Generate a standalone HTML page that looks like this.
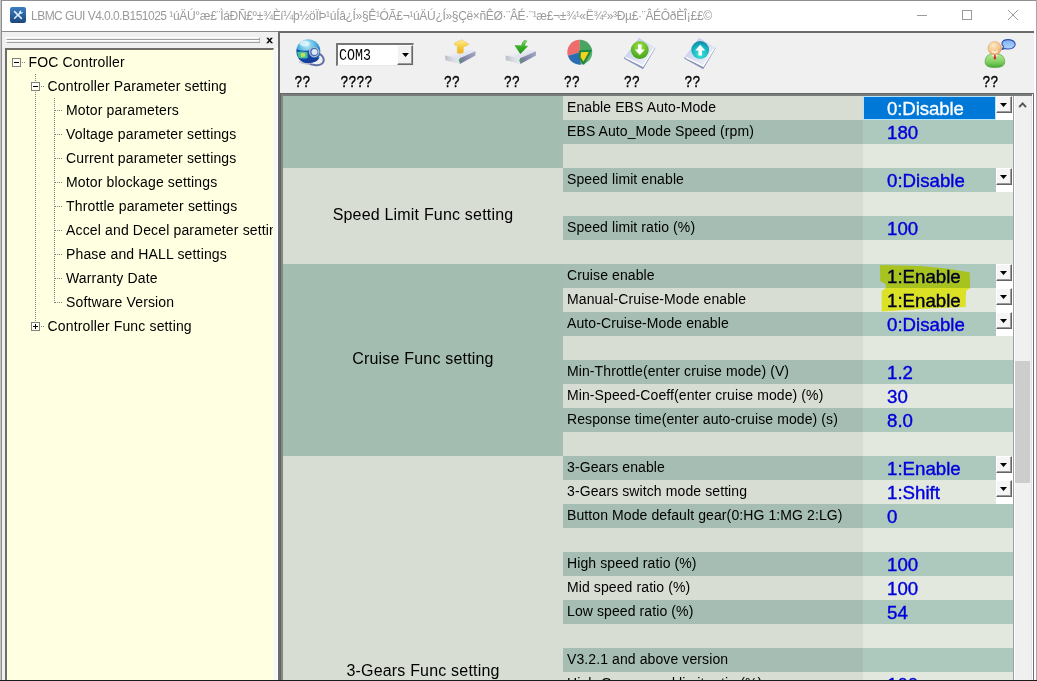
<!DOCTYPE html>
<html lang="en"><head><meta charset="utf-8"><title>LBMC GUI</title>
<style>
html,body{margin:0;padding:0;}
body{width:1037px;height:681px;overflow:hidden;background:#f0f0f0;font-family:"Liberation Sans",sans-serif;}
#win{position:relative;width:1037px;height:681px;overflow:hidden;background:#f0f0f0;}
#win div,#win span,#win svg,#win i{position:absolute;box-sizing:border-box;}
/* window frame */
.titlebar{left:0;top:0;width:1037px;height:32px;background:#fff;border-top:1px solid #8f8f8f;border-bottom:1px solid #8a8a8a;}
.tline{left:278px;top:31px;width:757px;height:2px;background:#6b6b6b;}
.ttext{left:31px;top:6.5px;height:18px;line-height:18px;font-size:12px;color:#9a9a9a;white-space:pre;}
.ttext span{position:static !important;}
.t1{letter-spacing:-0.52px;}.t2{letter-spacing:-0.32px;}
.edgeL0{left:0;top:0;width:1px;height:681px;background:#c4c4c4;}
.edgeL1{left:1px;top:0;width:1px;height:681px;background:#8e8e8e;}
.edgeR0{left:1036px;top:0;width:1px;height:681px;background:#a6a6a6;}
.edgeR1{left:1034px;top:31px;width:2px;height:650px;background:#fff;}
.edgeB{left:0;top:680px;width:1037px;height:1px;background:#1c1c1c;}
/* left panel */
.grip{left:6px;width:254px;height:3px;border-top:1px solid #fff;border-left:1px solid #fff;border-bottom:1px solid #a0a0a0;border-right:1px solid #a0a0a0;}
.g1{top:37px}.g2{top:40px}
.px{left:264.6px;top:32.1px;width:9px;height:16px;line-height:16px;font-size:10.5px;font-weight:bold;color:#000;-webkit-text-stroke:0.3px #000;text-align:center;transform:scale(1.06,0.84);transform-origin:50% 50%;}
.treebox{left:5px;top:48px;width:269px;height:640px;background:#ffffe1;border-top:2px solid #6e6d6a;border-left:2px solid #6e6d6a;border-right:1px solid #fcfcf0;overflow:hidden;}
.treein{left:0;top:0;width:266px;height:640px;overflow:hidden;}
.tl{height:24px;line-height:24px;font-size:14px;letter-spacing:0.15px;color:#000;white-space:nowrap;}
.lstrip{left:274px;top:48px;width:4px;height:633px;background:#f6f6f6;border-right:2px solid #fbfbfb;}
.split{left:278px;top:32px;width:2px;height:649px;background:#6c6c6c;}
/* grid */
.gridframe{left:280px;top:93px;width:754px;height:600px;border-top:1px solid #686868;border-left:1px solid #626262;border-right:1px solid #6b6b6b;background:#f0f0f0;}
.gf2{left:281px;top:94px;width:751px;height:600px;border-top:2px solid #787d7b;border-left:2px solid #838886;}
.grid{left:283px;top:96px;width:730px;height:590px;overflow:hidden;background:#d9ded5;}
.sec{left:0;width:280px;}
.sec.d{background:#a3bdb1;}
.sec.l{background:#d8ddd4;}
.sec span{left:0;width:280px;top:50%;margin-top:-11px;height:20px;line-height:20px;text-align:center;font-size:16px;letter-spacing:0.19px;color:#000;white-space:nowrap;}
.pr{left:280px;width:300px;height:24px;line-height:23px;font-size:14px;letter-spacing:0.1px;color:#000;padding-left:4px;white-space:nowrap;}
.pr.l{background:#d8ddd4;}
.pr.d{background:#a5bdb2;}
.vr{left:580px;width:150px;height:24px;}
.vr.l{background:#e2e8dd;}
.vr.d{background:#adc9be;}
.vr span{left:24px;top:0;height:24px;line-height:26px;font-size:18.67px;letter-spacing:0;color:#0000dc;-webkit-text-stroke:0.4px #0000dc;white-space:nowrap;}
.selbox{left:0;top:0;width:133px;height:24px;border:1px solid #b5e3fb;background:#0078d7;color:#fff;font-size:18.67px;letter-spacing:-0.1px;-webkit-text-stroke:0.3px #fff;line-height:24px;padding-left:23px;white-space:nowrap;}
.cbw{left:713px;width:17px;height:24px;background:#fff;}
.cbb{left:713px;width:16px;height:17px;background:#f5f5f5;border-top:1px solid #fff;border-left:1px solid #fff;border-right:1px solid #646464;border-bottom:1px solid #646464;box-shadow:inset -1px -1px 0 #9a9a9a;}
.cbb i{left:3px;top:6px;width:7px;height:4px;background:#000;clip-path:polygon(0 0,100% 0,50% 100%);}
/* scrollbar */
.sbline{left:1013px;top:96px;width:1px;height:585px;background:#a0a0a0;}
.sbw{left:1014px;top:96px;width:1px;height:585px;background:#fff;}
.sbt{left:1015px;top:96px;width:17px;height:585px;background:#f0f0f0;}
.sbthumb{left:1015px;top:361px;width:15px;height:122px;background:#cdcdcd;}
.sbe{left:1031px;top:96px;width:1px;height:585px;background:#e3e3e3;}
.sbw2{left:1032px;top:96px;width:1px;height:585px;background:#fff;}
/* toolbar */
.tbl{top:74.9px;height:16px;line-height:16px;font-family:"Liberation Mono",monospace;font-size:13.33px;color:#000;-webkit-text-stroke:0.3px #000;white-space:nowrap;transform:scaleY(1.24);transform-origin:0 50%;}
.combo{left:336px;top:43px;width:78px;height:23px;background:#fff;border-top:2px solid #767676;border-left:2px solid #767676;border-right:1px solid #e8e8e8;border-bottom:1px solid #e8e8e8;}
.combo .ct{left:1px;top:1px;height:19px;line-height:19px;font-family:"Liberation Mono",monospace;font-size:13.33px;color:#000;transform:scaleY(1.2);transform-origin:0 50%;}
.combo .cb{left:59px;top:0;width:16px;height:20px;background:#f2f2f2;border-top:1px solid #fff;border-left:1px solid #fff;border-right:1px solid #686868;border-bottom:1px solid #686868;box-shadow:inset -1px -1px 0 #9a9a9a;}
.combo .cb i{left:4px;top:7px;width:7px;height:4px;background:#000;clip-path:polygon(0 0,100% 0,50% 100%);}

</style></head>
<body>
<div id="win">
<div class="titlebar"></div>
<div class="ttext"><span class="t1">LBMC GUI V4.0.0.B151025 </span><span class="t2">¹úÄÚ°æ£¨ÌáÐÑ£º±¾Èí¼þ½öÏÞ¹úÍâ¿Í»§Ê¹ÓÃ£¬¹úÄÚ¿Í»§Çë×ñÊØ·¨ÂÉ·¨¹æ£¬±¾¹«Ë¾²»³Ðµ£·¨ÂÉÔðÈÎ¡££©</span></div>
<div class="tline"></div><div class="edgeL0"></div><div class="edgeL1"></div><div class="edgeR1"></div><div class="edgeR0"></div>
<svg class="ticon" style="left:10px;top:7px" width="16" height="16" viewBox="0 0 16 16"><defs><linearGradient id="tg" x1="0" y1="0" x2="0" y2="1"><stop offset="0" stop-color="#3c7fc0"/><stop offset="1" stop-color="#1b467c"/></linearGradient></defs><rect x="0" y="0" width="16" height="16" rx="2.2" fill="url(#tg)"/><path d="M4.6 4.6 L11.4 11.4" stroke="#dceefc" stroke-width="1.6" stroke-linecap="round"/><path d="M10.8 5.2 L4.6 11.3" stroke="#dceefc" stroke-width="1.6" stroke-linecap="round"/><circle cx="10.8" cy="5.2" r="1.7" fill="#dceefc"/><circle cx="11.7" cy="4.3" r="0.85" fill="#2f6fae"/></svg>
<svg class="wc" style="left:910px;top:5px" width="120" height="22" viewBox="0 0 120 22"><path d="M7 10.5 H17" stroke="#9a9a9a" stroke-width="1" fill="none"/><rect x="52.5" y="5.5" width="9" height="9" stroke="#9a9a9a" stroke-width="1" fill="none"/><path d="M98 5 L108 15 M108 5 L98 15" stroke="#9a9a9a" stroke-width="1" fill="none"/></svg>
<svg class="tbicons" style="left:280px;top:33px" width="754" height="60" viewBox="280 33 754 60">
<defs>
<radialGradient id="gl" cx="0.45" cy="0.25" r="0.8"><stop offset="0" stop-color="#bfeaf7"/><stop offset="0.45" stop-color="#4fb4e0"/><stop offset="0.8" stop-color="#1a5fb5"/><stop offset="1" stop-color="#123f8f"/></radialGradient>
<linearGradient id="drT" x1="0" y1="0" x2="1" y2="1"><stop offset="0" stop-color="#ffffff"/><stop offset="1" stop-color="#cfd3e2"/></linearGradient>
<linearGradient id="drF" x1="0" y1="0" x2="1" y2="0"><stop offset="0" stop-color="#b9bcc8"/><stop offset="0.5" stop-color="#d9dbe4"/><stop offset="1" stop-color="#e6e8ee"/></linearGradient>
<linearGradient id="drR" x1="0" y1="1" x2="1" y2="0"><stop offset="0" stop-color="#6a6f96"/><stop offset="1" stop-color="#a7abc6"/></linearGradient>
<linearGradient id="yel" x1="0" y1="0" x2="0" y2="1"><stop offset="0" stop-color="#fdf0a0"/><stop offset="0.5" stop-color="#f7cf3a"/><stop offset="1" stop-color="#f0b020"/></linearGradient>
<linearGradient id="grn" x1="0" y1="0" x2="0" y2="1"><stop offset="0" stop-color="#8be06a"/><stop offset="0.5" stop-color="#36b024"/><stop offset="1" stop-color="#1f8f18"/></linearGradient>
<linearGradient id="doc" x1="0" y1="0" x2="1" y2="1"><stop offset="0" stop-color="#b9c3e6"/><stop offset="0.6" stop-color="#dfe3f3"/><stop offset="1" stop-color="#f4f5fb"/></linearGradient>
<radialGradient id="gc" cx="0.5" cy="0.3" r="0.8"><stop offset="0" stop-color="#a4e04a"/><stop offset="0.6" stop-color="#5cb824"/><stop offset="1" stop-color="#3b9416"/></radialGradient>
<radialGradient id="tc" cx="0.5" cy="0.75" r="0.8"><stop offset="0" stop-color="#3fe6dc"/><stop offset="0.6" stop-color="#16b4c0"/><stop offset="1" stop-color="#0b7f9c"/></radialGradient>
<radialGradient id="hd" cx="0.4" cy="0.3" r="0.8"><stop offset="0" stop-color="#fde9c8"/><stop offset="0.6" stop-color="#f5c48a"/><stop offset="1" stop-color="#e59a55"/></radialGradient>
<linearGradient id="bd" x1="0" y1="0" x2="0" y2="1"><stop offset="0" stop-color="#bdeaa0"/><stop offset="0.6" stop-color="#7fd060"/><stop offset="1" stop-color="#46a632"/></linearGradient>
<linearGradient id="bub" x1="0" y1="0" x2="0" y2="1"><stop offset="0" stop-color="#7fb0f4"/><stop offset="1" stop-color="#b4d4fd"/></linearGradient>
<filter id="sb" x="-20%" y="-20%" width="140%" height="140%"><feGaussianBlur stdDeviation="0.45"/></filter>
</defs>
<!-- icon 1: network globe -->
<g filter="url(#sb)">
<path d="M318.6 53.4 Q324.6 56.4 323.6 61.4 Q321.6 66 314.6 65 Q310.6 64.6 308 63.4" fill="none" stroke="#6470a6" stroke-width="2" stroke-linecap="round"/>
<path d="M299 61.6 Q304 64.6 310 63.6" stroke="#c4c8d4" stroke-width="1.8" fill="none"/>
<circle cx="308.3" cy="51.2" r="12" fill="url(#gl)"/>
<path d="M296.6 49.2 Q302 51.6 309.6 50.2 L311 55 L312 62 Q305 65 299.6 59.8 Q297 56 296.6 49.2 Z" fill="#123a9c" opacity="0.85"/>
<path d="M297 52 Q302 51 307.6 52.2 L307.6 58 Q302 59.4 298.4 57.4 Z" fill="#3cc0a2"/>
<path d="M300.4 53.6 l4.4 -1 l0.6 3.6 l-4.2 1.2 z" fill="#c4dc58"/>
<path d="M310 55 Q314 60.6 319.6 57 Q318 62 311.6 62.6 Z" fill="#143c9c"/>
<circle cx="314.2" cy="52" r="5.3" fill="#a9b9cb"/>
<circle cx="314.2" cy="52" r="3.9" fill="#3a66b4"/>
<circle cx="314.5" cy="52" r="3" fill="#dfe6f2"/>
<ellipse cx="304.6" cy="43.4" rx="5" ry="3" fill="#e4f8fc" opacity="0.8"/>
</g>
<!-- icon 2: drive + yellow up arrow -->
<g filter="url(#sb)">
<path d="M445 55.5 L464.5 48.5 L475.6 51.3 L459.5 58.2 Z" fill="url(#drT)"/>
<path d="M445 55.5 L459.5 58.2 L459.8 64 L445.4 60.2 Z" fill="url(#drF)"/>
<path d="M459.5 58.2 L475.6 51.3 L475.4 55.4 L459.8 64 Z" fill="url(#drR)"/>
<circle cx="460" cy="60.6" r="1.3" fill="#3fae4a"/>
<path d="M457.3 53 L457.3 46.5 Q457.5 44.6 455 45.2 L454.6 43 L461.5 39.8 L468.8 44.2 L466 46.2 Q463.5 45.5 463.3 47.5 L463.3 52.5 Q460 54 457.3 53 Z" fill="url(#yel)" stroke="#e8b83a" stroke-width="0.5"/>
</g>
<!-- icon 3: drive + green down arrow -->
<g filter="url(#sb)">
<path d="M505.5 55.5 L525 48.5 L536.1 51.3 L520 58.2 Z" fill="url(#drT)"/>
<path d="M505.5 55.5 L520 58.2 L520.3 64 L505.9 60.2 Z" fill="url(#drF)"/>
<path d="M520 58.2 L536.1 51.3 L535.9 55.4 L520.3 64 Z" fill="url(#drR)"/>
<circle cx="520.5" cy="60.6" r="1.3" fill="#3fae4a"/>
<path d="M524.5 40.2 Q521.8 42.2 521.6 45.8 L515 45.5 L520.4 53.8 L527.6 46.2 L524.6 46 Q524.4 43 527 41.2 Z" fill="url(#grn)" stroke="#2a9a20" stroke-width="0.5"/>
</g>
<!-- icon 4: pie -->
<g filter="url(#sb)">
<circle cx="579.8" cy="52.2" r="12.4" fill="#d0d4d8"/>
<path d="M579.8 52.2 L579.8 39.8 A12.4 12.4 0 0 0 567.9 55.8 Z" fill="#ee6c6c"/>
<path d="M579.8 52.2 L579.8 39.8 A12.4 12.4 0 0 1 592.2 52.2 Z" fill="#4aa662"/>
<path d="M579.8 52.2 L567.9 55.8 A12.4 12.4 0 0 0 581 64.6 Z" fill="#2a6db4"/>
<path d="M579.8 52.2 L592.2 52.2 A12.4 12.4 0 0 1 581 64.6 Z" fill="#58b070"/>
<path d="M580 51.2 L590.6 50.8 L583.6 63.6 L579.6 57.5 Z" fill="#f6d21c" stroke="#1f8a3c" stroke-width="2" stroke-linejoin="round"/>
</g>
<!-- icon 5: doc + green down -->
<g filter="url(#sb)">
<path d="M624.2 58.8 L643 69.2 L655.2 48.6 L655.2 46.8 L643 65.6 L624.2 56.6 Z" fill="#8c98ba"/>
<path d="M624.2 56.6 L638.8 37.2 L655.2 46.8 L643 66.4 Z" fill="url(#doc)" stroke="#f4f6fc" stroke-width="0.8"/>
<path d="M626 57.6 L643 66 L653.5 49" stroke="#ffffff" stroke-width="1.2" fill="none"/>
<circle cx="639.8" cy="50" r="8.9" fill="url(#gc)"/>
<path d="M638 44.4 h3.6 v5 h3.2 l-5 5.6 l-5 -5.6 h3.2 z" fill="#ffffff"/>
</g>
<!-- icon 6: doc + teal up -->
<g filter="url(#sb)">
<path d="M684.4 58.8 L703.2 69.2 L715.4 48.6 L715.4 46.8 L703.2 65.6 L684.4 56.6 Z" fill="#8c98ba"/>
<path d="M684.4 56.6 L699 37.2 L715.4 46.8 L703.2 66.4 Z" fill="url(#doc)" stroke="#f4f6fc" stroke-width="0.8"/>
<path d="M686.2 57.6 L703.2 66 L713.7 49" stroke="#ffffff" stroke-width="1.2" fill="none"/>
<circle cx="700.2" cy="50" r="8.9" fill="url(#tc)"/>
<path d="M698.4 55.4 h3.6 v-5 h3.2 l-5 -5.6 l-5 5.6 h3.2 z" fill="#ffffff"/>
</g>
<!-- icon 7: user + bubble -->
<g filter="url(#sb)">
<path d="M985 62 Q985 53.6 994.8 53.6 Q1004.8 53.6 1004.8 62 Q1004.8 67.6 994.8 67.6 Q985 67.6 985 62 Z" fill="url(#bd)" stroke="#4a9a3a" stroke-width="0.6"/>
<path d="M991.6 54.2 L994.8 59 L998 54.2 Z" fill="#ffffff"/>
<path d="M994 55 h1.7 l0.5 3.4 l-1.3 1.4 l-1.4 -1.4 z" fill="#d8322a"/>
<circle cx="994.7" cy="48.2" r="6.7" fill="url(#hd)" stroke="#d79a5c" stroke-width="0.5"/>
<path d="M991.8 51.2 Q994.7 53.4 997.6 51.2" stroke="#fff6ea" stroke-width="1.2" fill="none"/>
<path d="M1002.2 49.4 L1003.6 46.6 Q1001.4 44.8 1002 42.6 Q1003.4 39.4 1008.6 39.6 Q1014.6 40 1015.2 44.2 Q1014.8 48.6 1008.6 49 Q1006.4 49 1005.2 48.4 Z" fill="url(#bub)" stroke="#3050a8" stroke-width="1.1"/>
</g>
</svg>
<div class="combo"><span class="ct">COM3</span><div class="cb"><i></i></div></div>
<div class="tbl" style="left:294.5px">??</div>
<div class="tbl" style="left:340.5px">????</div>
<div class="tbl" style="left:444px">??</div>
<div class="tbl" style="left:504px">??</div>
<div class="tbl" style="left:564px">??</div>
<div class="tbl" style="left:624px">??</div>
<div class="tbl" style="left:684.5px">??</div>
<div class="tbl" style="left:982.5px">??</div>
<div class="grip g1"></div><div class="grip g2"></div>
<div class="px">x</div>
<div class="treebox"><div class="treein">
<div class="tl" style="left:21.5px;top:0px">FOC Controller</div>
<div class="tl" style="left:40.5px;top:24px">Controller Parameter setting</div>
<div class="tl" style="left:59px;top:48px">Motor parameters</div>
<div class="tl" style="left:59px;top:72px">Voltage parameter settings</div>
<div class="tl" style="left:59px;top:96px">Current parameter settings</div>
<div class="tl" style="left:59px;top:120px">Motor blockage settings</div>
<div class="tl" style="left:59px;top:144px">Throttle parameter settings</div>
<div class="tl" style="left:59px;top:168px">Accel and Decel parameter settings</div>
<div class="tl" style="left:59px;top:192px">Phase and HALL settings</div>
<div class="tl" style="left:59px;top:216px">Warranty Date</div>
<div class="tl" style="left:59px;top:240px">Software Version</div>
<div class="tl" style="left:40.5px;top:264px">Controller Func setting</div>
</div></div>
<svg class="tlines" style="left:0;top:0" width="280" height="681" viewBox="0 0 280 681" shape-rendering="crispEdges">
<g stroke="#808080" stroke-width="1" stroke-dasharray="1 1" fill="none">
<path d="M35.5 74 V321"/><path d="M54.5 98 V303"/>
<path d="M22 62.5 H26"/><path d="M41 86.5 H45"/><path d="M41 326.5 H45"/>
<path d="M55 110.5 H63"/><path d="M55 134.5 H63"/><path d="M55 158.5 H63"/><path d="M55 182.5 H63"/><path d="M55 206.5 H63"/><path d="M55 230.5 H63"/><path d="M55 254.5 H63"/><path d="M55 278.5 H63"/><path d="M55 302.5 H63"/>
</g>
<g stroke="#808080" stroke-width="1" fill="#fffff4">
<rect x="12.5" y="58.5" width="8" height="8"/><rect x="31.5" y="82.5" width="8" height="8"/><rect x="31.5" y="322.5" width="8" height="8"/>
</g>
<g stroke="#000" stroke-width="1" fill="none">
<path d="M14 62.5 H19"/><path d="M33 86.5 H38"/><path d="M33 326.5 H38"/><path d="M35.5 324 V329"/>
</g>
</svg>
<div class="gridframe"></div><div class="gf2"></div>
<div class="grid">
<div class="sec d" style="top:0px;height:72px"><span></span></div>
<div class="sec l" style="top:72px;height:96px"><span>Speed Limit Func setting</span></div>
<div class="sec d" style="top:168px;height:192px"><span>Cruise Func setting</span></div>
<div class="sec l" style="top:360px;height:432px"><span>3-Gears Func setting</span></div>
<div class="pr l" style="top:0px">Enable EBS Auto-Mode</div><div class="vr l" style="top:0px"><div class="selbox">0:Disable</div></div><div class="cbw" style="top:0px"></div><div class="cbb" style="top:0px"><i></i></div>
<div class="pr d" style="top:24px">EBS Auto_Mode Speed (rpm)</div><div class="vr d" style="top:24px"><span>180</span></div>
<div class="pr l" style="top:48px"></div><div class="vr l" style="top:48px"><span></span></div>
<div class="pr d" style="top:72px">Speed limit enable</div><div class="vr d" style="top:72px"><span>0:Disable</span></div><div class="cbw" style="top:72px"></div><div class="cbb" style="top:72px"><i></i></div>
<div class="pr l" style="top:96px"></div><div class="vr l" style="top:96px"><span></span></div>
<div class="pr d" style="top:120px">Speed limit ratio (%)</div><div class="vr d" style="top:120px"><span>100</span></div>
<div class="pr l" style="top:144px"></div><div class="vr l" style="top:144px"><span></span></div>
<div class="pr d" style="top:168px">Cruise enable</div><div class="vr d" style="top:168px"><span>1:Enable</span></div><div class="cbw" style="top:168px"></div><div class="cbb" style="top:168px"><i></i></div>
<div class="pr l" style="top:192px">Manual-Cruise-Mode enable</div><div class="vr l" style="top:192px"><span>1:Enable</span></div><div class="cbw" style="top:192px"></div><div class="cbb" style="top:192px"><i></i></div>
<div class="pr d" style="top:216px">Auto-Cruise-Mode enable</div><div class="vr d" style="top:216px"><span>0:Disable</span></div><div class="cbw" style="top:216px"></div><div class="cbb" style="top:216px"><i></i></div>
<div class="pr l" style="top:240px"></div><div class="vr l" style="top:240px"><span></span></div>
<div class="pr d" style="top:264px">Min-Throttle(enter cruise mode) (V)</div><div class="vr d" style="top:264px"><span>1.2</span></div>
<div class="pr l" style="top:288px">Min-Speed-Coeff(enter cruise mode) (%)</div><div class="vr l" style="top:288px"><span>30</span></div>
<div class="pr d" style="top:312px">Response time(enter auto-cruise mode) (s)</div><div class="vr d" style="top:312px"><span>8.0</span></div>
<div class="pr l" style="top:336px"></div><div class="vr l" style="top:336px"><span></span></div>
<div class="pr d" style="top:360px">3-Gears enable</div><div class="vr d" style="top:360px"><span>1:Enable</span></div><div class="cbw" style="top:360px"></div><div class="cbb" style="top:360px"><i></i></div>
<div class="pr l" style="top:384px">3-Gears switch mode setting</div><div class="vr l" style="top:384px"><span>1:Shift</span></div><div class="cbw" style="top:384px"></div><div class="cbb" style="top:384px"><i></i></div>
<div class="pr d" style="top:408px">Button Mode default gear(0:HG 1:MG 2:LG)</div><div class="vr d" style="top:408px"><span>0</span></div>
<div class="pr l" style="top:432px"></div><div class="vr l" style="top:432px"><span></span></div>
<div class="pr d" style="top:456px">High speed ratio (%)</div><div class="vr d" style="top:456px"><span>100</span></div>
<div class="pr l" style="top:480px">Mid speed ratio (%)</div><div class="vr l" style="top:480px"><span>100</span></div>
<div class="pr d" style="top:504px">Low speed ratio (%)</div><div class="vr d" style="top:504px"><span>54</span></div>
<div class="pr l" style="top:528px"></div><div class="vr l" style="top:528px"><span></span></div>
<div class="pr d" style="top:552px">V3.2.1 and above version</div><div class="vr d" style="top:552px"><span></span></div>
<div class="pr l" style="top:576px">High-Gear speed limit ratio (%)</div><div class="vr l" style="top:576px"><span>100</span></div>
</div>
<div class="sbline"></div><div class="sbw"></div><div class="sbt"></div><div class="sbthumb"></div><div class="sbe"></div><div class="sbw2"></div>
<svg class="sbarrow" style="left:1015px;top:98px" width="16" height="14" viewBox="0 0 16 14"><path d="M4.2 9.2 L7.6 5.4 L11 9.2" stroke="#555" stroke-width="2" fill="none"/></svg>
<div class="lstrip"></div><div class="split"></div>
<svg class="hl" style="left:870px;top:258px;mix-blend-mode:multiply" width="110" height="56" viewBox="870 258 110 56"><defs><filter id="bl" x="-5%" y="-10%" width="110%" height="120%"><feGaussianBlur stdDeviation="0.6"/></filter></defs>
<g filter="url(#bl)" fill="#f8f82c">
<polygon points="880,265 921,266 946,268.6 969.7,272.3 970.2,288.5 886,288.5 885.5,284 880.2,281"/>
<polygon points="881.7,291 886,288 969.7,288 966,291 965.6,307 930,308.5 881.7,311.4"/>
</g></svg>
<div class="edgeB"></div>
</div>
</body></html>
